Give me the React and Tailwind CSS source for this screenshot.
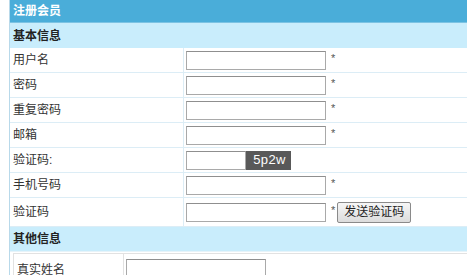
import React from 'react';

const rows = [
  { label: '用户名', star: true },
  { label: '密码', star: true },
  { label: '重复密码', star: true },
  { label: '邮箱', star: true },
  { label: '验证码:', captcha: true },
  { label: '手机号码', star: true },
  { label: '验证码', star: true, send: true },
];

const font = { fontFamily: '"Liberation Sans", "Noto Sans CJK SC", sans-serif' };

const Input = ({ w = 'w-[140px]' }) => (
  <input
    type="text"
    className={`${w} h-[19px] border border-[#a9a9a9] border-t-[#8f8f8f] bg-white outline-none`}
  />
);

export default function App() {
  return (
    <div className="w-[467px] h-[275px] overflow-hidden bg-white pl-[9px] text-[12px] text-[#333]" style={font}>
      <div className="border-l border-[#b8d9ea] h-full">
        <div className="h-[23px] bg-[#4aadd9] flex items-center px-[3px] font-bold text-white border-b border-[#7cc3e3]">
          注册会员
        </div>
        <div className="h-[25px] bg-[#c9edfc] flex items-center px-[3px] font-bold text-[#222]">
          基本信息
        </div>
        {rows.map((r, i) => (
          <div
            key={i}
            className={`flex border-b border-[#dcedf6] ${i === rows.length - 1 ? 'h-[29px]' : 'h-[25px]'}`}
          >
            <div className="w-[174px] flex items-center px-[3px] border-r border-[#dcedf6]">{r.label}</div>
            <div className="flex items-center pl-[2px]">
              {r.captcha ? (
                <>
                  <Input w="w-[60px]" />
                  <span className="h-[19px] w-[45px] bg-[#595959] text-white flex items-center justify-center text-[13px] tracking-wide pl-[2px]">
                    5p2w
                  </span>
                </>
              ) : (
                <Input />
              )}
              {r.star && <span className="ml-[5px] -mt-[4px] text-[#555] text-[11px] leading-none">*</span>}
              {r.send && (
                <button className="ml-[2px] h-[21px] px-[6px] border border-[#8a8a8a] rounded-[2px] bg-gradient-to-b from-[#f6f6f6] to-[#dcdcdc] text-[12px] text-[#222]">
                  发送验证码
                </button>
              )}
            </div>
          </div>
        ))}
        <div className="h-[25px] bg-[#c9edfc] flex items-center px-[3px] font-bold text-[#222] border-b border-[#e6f3f9]">
          其他信息
        </div>
        <div className="flex h-[26px] ml-[3px] mt-[1px] border-t border-l border-[#e2e2e2]">
          <div className="w-[110px] flex items-center px-[3px] border-r border-[#e2e2e2] pt-[6px]">真实姓名</div>
          <div className="flex items-start pl-[2px] pt-[5px]">
            <Input />
          </div>
        </div>
      </div>
    </div>
  );
}
